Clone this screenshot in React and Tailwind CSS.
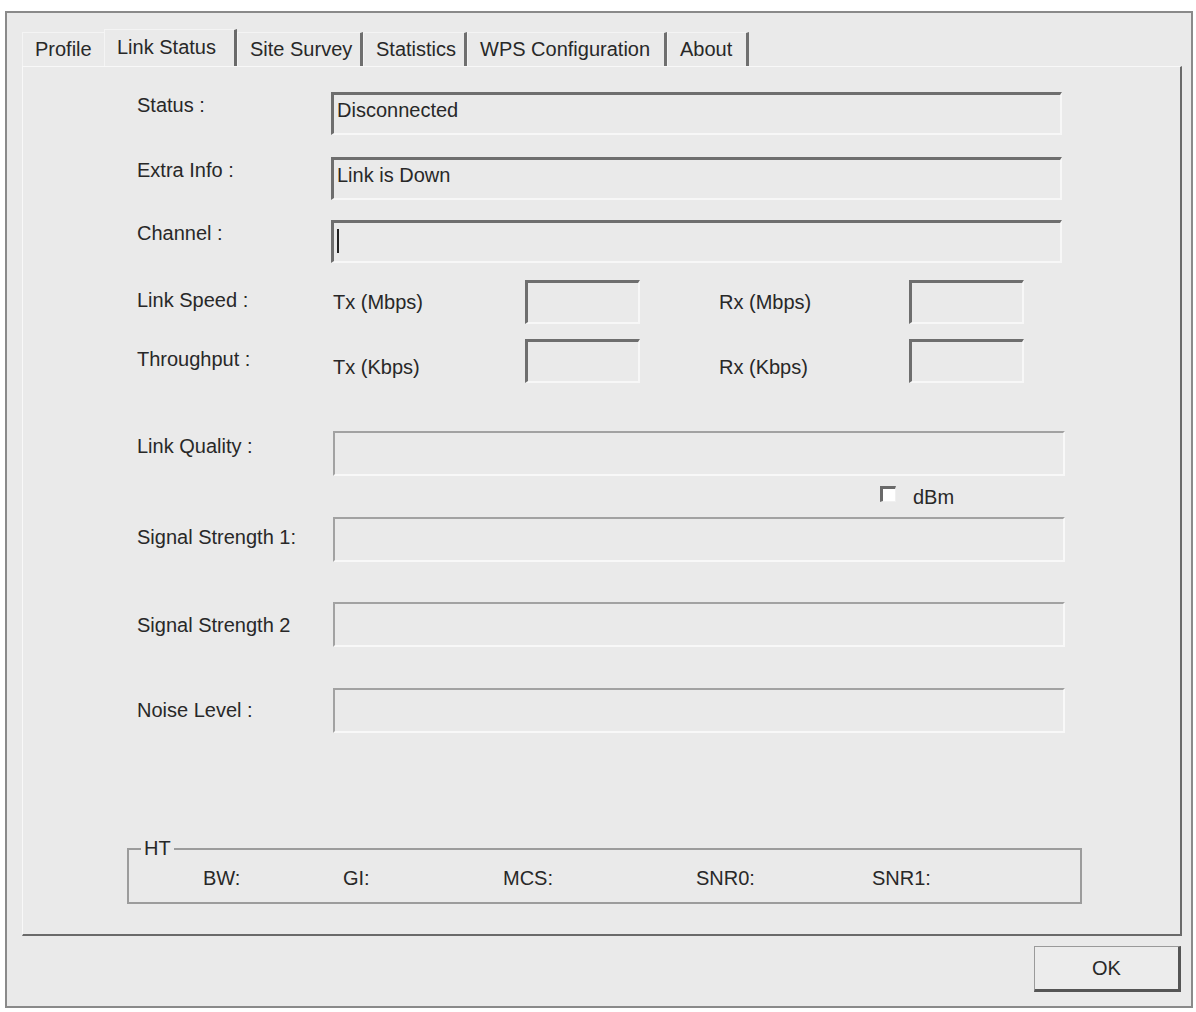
import React from 'react';

const font = { fontFamily: '"Liberation Sans", Arial, sans-serif' };

const tabs = [
  { label: 'Profile', w: 'w-[82px]', first: true },
  { label: 'Link Status', w: 'w-[133px]', active: true },
  { label: 'Site Survey', w: 'w-[126px]' },
  { label: 'Statistics', w: 'w-[104px]' },
  { label: 'WPS Configuration', w: 'w-[200px]' },
  { label: 'About', w: 'w-[82px]' },
];

function Tab({ label, w, active, first }) {
  if (active) {
    return (
      <div className={`${w} h-[38px] pl-[12px] pt-[5px] border-t border-l border-[#f4f4f4] border-r-[3px] border-r-[#6a6a6a] bg-[#eaeaea] -mb-px`}>
        {label}
      </div>
    );
  }
  const right = first ? 'border-r-0' : 'border-r-[3px] border-r-[#6f6f6f]';
  return (
    <div className={`${w} h-[34px] pl-[12px] pt-[4px] border-t border-l border-[#f4f4f4] ${right} whitespace-nowrap`}>
      {label}
    </div>
  );
}

function Edit({ children, caret }) {
  return (
    <div className="w-[731px] h-[43px] border-t-[3px] border-l-[3px] border-[#6e6e6e] border-b-2 border-r-2 border-b-[#f7f7f7] border-r-[#f7f7f7] pl-[3px] pt-[3px] leading-6 flex items-start">
      {caret ? <div className="w-[2px] h-[24px] mt-[3px] bg-[#222]" /> : children}
    </div>
  );
}

function SmallBox() {
  return (
    <div className="w-[115px] h-[44px] border-t-[3px] border-l-[3px] border-[#6e6e6e] border-b-2 border-r-2 border-b-[#f7f7f7] border-r-[#f7f7f7]" />
  );
}

function Bar() {
  return (
    <div className="ml-[2px] w-[732px] h-[45px] border-t-2 border-l-2 border-[#a2a2a2] border-b-2 border-r-2 border-b-[#f8f8f8] border-r-[#f8f8f8]" />
  );
}

export default function App() {
  return (
    <div className="w-[1196px] h-[1012px] bg-white pt-[11px] pl-[5px] text-[20px] leading-6 text-[#282828]" style={font}>
      <div className="w-[1188px] h-[997px] border-2 border-[#8a8a8a] bg-[#eaeaea] flex flex-col">
        {/* tab strip */}
        <div className="h-[53px] pl-[15px] flex items-end">
          {tabs.map((t) => (
            <Tab key={t.label} {...t} />
          ))}
        </div>

        {/* tab page */}
        <div className="ml-[15px] w-[1160px] h-[870px] border-t border-l border-[#f8f8f8] border-r-2 border-b-2 border-r-[#6a6a6a] border-b-[#6a6a6a]">
          <div className="pl-[114px]">
            <div className="mt-[25px] flex items-start">
              <div className="w-[194px] pt-px">Status :</div>
              <Edit>Disconnected</Edit>
            </div>
            <div className="mt-[22px] flex items-start">
              <div className="w-[194px] pt-px">Extra Info :</div>
              <Edit>Link is Down</Edit>
            </div>
            <div className="mt-[20px] flex items-start">
              <div className="w-[194px] pt-px">Channel :</div>
              <Edit caret />
            </div>

            <div className="mt-[17px] flex items-start">
              <div className="w-[196px] pt-[8px]">Link Speed :</div>
              <div className="w-[192px] pt-[10px]">Tx (Mbps)</div>
              <SmallBox />
              <div className="ml-[79px] w-[190px] pt-[10px]">Rx (Mbps)</div>
              <SmallBox />
            </div>
            <div className="mt-[15px] flex items-start">
              <div className="w-[196px] pt-[8px]">Throughput :</div>
              <div className="w-[192px] pt-[16px]">Tx (Kbps)</div>
              <SmallBox />
              <div className="ml-[79px] w-[190px] pt-[16px]">Rx (Kbps)</div>
              <SmallBox />
            </div>

            <div className="mt-[48px] flex items-start">
              <div className="w-[194px] pt-[3px]">Link Quality :</div>
              <Bar />
            </div>
            <div className="h-[41px] flex items-start pl-[743px] pt-[10px]">
              <div className="w-[16px] h-[16px] border-t-[3px] border-l-[3px] border-[#6a6a6a] border-b border-r border-b-[#f0f0f0] border-r-[#f0f0f0] bg-white" />
              <div className="ml-[17px] -mt-[1px]">dBm</div>
            </div>
            <div className="flex items-start">
              <div className="w-[194px] pt-[8px]">Signal Strength 1:</div>
              <Bar />
            </div>
            <div className="mt-[40px] flex items-start">
              <div className="w-[194px] pt-[11px]">Signal Strength 2</div>
              <Bar />
            </div>
            <div className="mt-[41px] flex items-start">
              <div className="w-[194px] pt-[10px]">Noise Level :</div>
              <Bar />
            </div>
          </div>

          {/* HT group */}
          <div className="mt-[115px] ml-[104px] w-[955px] h-[56px] border-2 border-[#9c9c9c] relative">
            <span className="absolute -top-[14px] left-[12px] px-[3px] bg-[#eaeaea]">HT</span>
            <div className="flex pt-[16px] pl-[74px]">
              <div className="w-[140px]">BW:</div>
              <div className="w-[160px]">GI:</div>
              <div className="w-[193px]">MCS:</div>
              <div className="w-[176px]">SNR0:</div>
              <div>SNR1:</div>
            </div>
          </div>
        </div>

        {/* buttons */}
        <div className="mt-[10px] flex justify-end pr-[10px]">
          <button className="w-[147px] h-[46px] border-t border-l border-[#9a9a9a] border-b-[3px] border-r-[3px] border-b-[#555] border-r-[#555] bg-[#ececec] text-[20px] text-[#282828]">
            OK
          </button>
        </div>
      </div>
    </div>
  );
}
